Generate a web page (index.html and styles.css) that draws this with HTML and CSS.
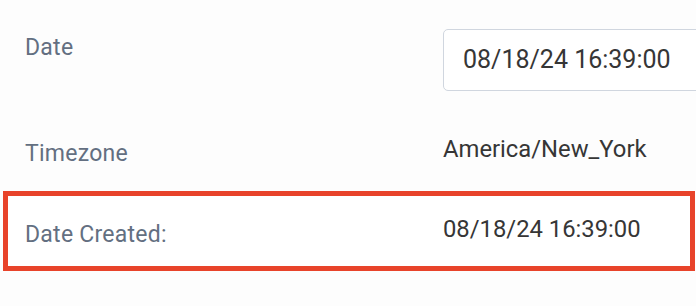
FILE: index.html
```html
<!DOCTYPE html>
<html>
<head>
<meta charset="utf-8">
<link rel="stylesheet" href="styles.css">
</head>
<body>
<div class="form">
  <div class="row row-date">
    <div class="label label-date">Date</div>
    <div class="input">08/18/24 16:39:00</div>
  </div>
  <div class="row row-tz">
    <div class="label label-tz">Timezone</div>
    <div class="value value-tz">America/New_York</div>
  </div>
  <div class="row row-created">
    <div class="label label-created">Date Created:</div>
    <div class="value value-created">08/18/24 16:39:00</div>
  </div>
</div>
</body>
</html>
```
FILE: styles.css
```css
html, body {
  margin: 0;
  padding: 0;
  background: #fdfdfd;
  overflow: hidden;
}
body {
  width: 696px;
  height: 306px;
  font-family: Roboto, "Liberation Sans", sans-serif;
}
.form {
  padding: 0 1px 0 3px;
}
.row {
  display: flex;
  align-items: flex-start;
  padding-left: 22px;
  line-height: 28px;
}
.label {
  width: 418px;
  flex: none;
  font-size: 23px;
  letter-spacing: 0.25px;
  color: #636f81;
}
.value {
  font-size: 23.8px;
  color: #363636;
}
.input {
  font-size: 25px;
  color: #363636;
}
.row-date {
  padding-top: 29px;
  height: 62px;
}
.label-date {
  margin-top: 5px;
}
.input {
  flex: none;
  width: 320px;
  box-sizing: border-box;
  height: 62px;
  border: 1.5px solid #d0d6df;
  border-radius: 5px;
  background: #ffffff;
  padding-left: 19px;
  display: flex;
  align-items: center;
}
.row-tz {
  height: 100px;
}
.label-tz {
  margin-top: 49px;
}
.value-tz {
  margin-top: 44px;
}
.row-created {
  border: 5px solid #e8432a;
  height: 70px;
  padding-left: 17px;
  background: #ffffff;
}
.label-created {
  margin-top: 25px;
}
.value-created {
  margin-top: 19px;
}
```
